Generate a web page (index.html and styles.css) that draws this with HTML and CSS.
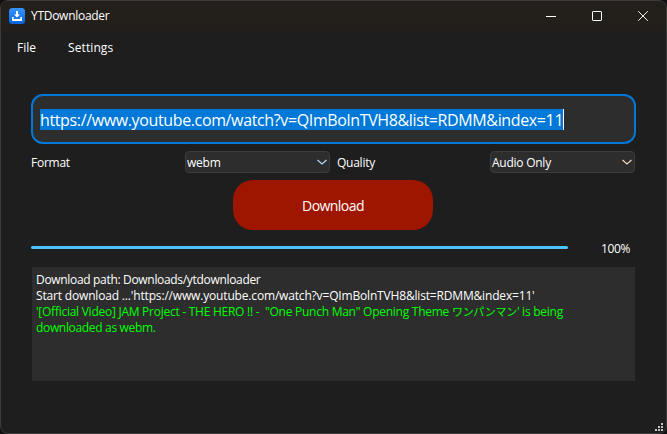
FILE: index.html
```html
<!DOCTYPE html>
<html lang="en">
<head>
<meta charset="utf-8">
<title>YTDownloader</title>
<link rel="stylesheet" href="styles.css">
</head>
<body>
<div class="window">
  <header class="titlebar">
    <svg class="logo" width="16" height="16" viewBox="0 0 16 16">
      <defs><linearGradient id="g" x1="0" y1="0" x2="0" y2="1"><stop offset="0" stop-color="#3594fb"/><stop offset="1" stop-color="#0864df"/></linearGradient></defs>
      <rect width="16" height="16" rx="3.5" fill="url(#g)"/>
      <path d="M7 3h2v3.500h2L8 9.500 5 6.500h2zM3 9h1.700v2h6.600V9H13v4H3z" fill="#fff"/>
    </svg>
    <span class="title">YTDownloader</span>
    <div class="controls">
      <svg width="12" height="12" viewBox="0 0 12 12"><path d="M1 6.500h10" stroke="#fff"/></svg>
      <svg width="12" height="12" viewBox="0 0 12 12"><rect x="1.500" y="1.500" width="9" height="9" rx=".6" fill="none" stroke="#fff"/></svg>
      <svg width="12" height="12" viewBox="0 0 12 12"><path d="m1.200 1.200 9.600 9.600m0-9.600-9.600 9.600" stroke="#eee"/></svg>
    </div>
  </header>
  <nav class="menubar"><span class="file">File</span><span class="settings">Settings</span></nav>
  <main class="content">
    <div class="url"><span class="selected">https://www.youtube.com/watch?v=QImBolnTVH8&amp;list=RDMM&amp;index=11</span></div>
    <div class="options">
      <label class="format">Format</label>
      <div class="combo"><span class="value">webm</span><svg width="12" height="8" viewBox="0 0 12 8"><path d="m1.500 2 4.500 4 4.500-4" fill="none" stroke="#b9d7f4" stroke-width="1.200"/></svg></div>
      <label class="quality">Quality</label>
      <div class="combo"><span class="value">Audio Only</span><svg width="12" height="8" viewBox="0 0 12 8"><path d="m1.500 2 4.500 4 4.500-4" fill="none" stroke="#f0d5b8" stroke-width="1.200"/></svg></div>
    </div>
    <button class="download">Download</button>
    <div class="progress"><div class="bar"></div><span class="percent">100%</span></div>
    <div class="log">
      <div class="path">Download path: Downloads/ytdownloader</div>
      <div class="start">Start download ...'https://www.youtube.com/watch?v=QImBolnTVH8&amp;list=RDMM&amp;index=11'</div>
      <div class="ok video">'[Official Video] JAM Project - THE HERO !! -&nbsp; "One Punch Man" Opening Theme <span class="jp">ワンパンマン</span>' is being</div>
      <div class="ok result">downloaded as webm.</div>
    </div>
  </main>
  <svg class="grip" width="8" height="8" viewBox="0 0 8 8" fill="#c4c4c4"><path d="M6 0h2v2H6zM3 3h2v2H3zM6 3h2v2H6zM0 6h2v2H0zM3 6h2v2H3zM6 6h2v2H6z"/></svg>
</div>
</body>
</html>
```
FILE: styles.css
```css
* { box-sizing: border-box; }
body {
  margin: 0;
  background: #111;
  color: #fff;
  font: 12px/16px "Open Sans", "Noto Sans CJK JP", sans-serif;
  white-space: nowrap;
}
.window {
  position: relative;
  width: 667px;
  height: 434px;
  border: 1px solid #3b3b3b;
  border-radius: 8px;
  background: #1e1e1e;
  overflow: hidden;
}
.titlebar {
  display: flex;
  align-items: center;
  height: 30px;
  padding: 0 17px 0 8px;
  background: #231f1b;
}
.logo { margin-right: 6px; }
.title { letter-spacing: -0.28px; }
.controls { display: flex; gap: 34px; margin-left: auto; margin-bottom: 1px; }
.menubar { display: flex; height: 32px; padding: 9px 16px; }
.file { width: 51px; }
.settings { letter-spacing: 0.1px; }
.content { padding: 31px 30px 0; }
.url {
  display: flex;
  align-items: center;
  height: 50px;
  width: 605px;
  padding-left: 7px;
  border: 2px solid #0078d7;
  border-radius: 12px;
  background: #2d2d2d;
}
.selected {
  width: 524px;
  height: 21px;
  background: #0078d7;
  border-right: 1px solid #fff;
  font-size: 16px;
  line-height: 23px;
  letter-spacing: -0.365px;
}
.options {
  display: grid;
  grid-template-columns: 154px 145px 160px 145px;
  align-items: center;
  height: 22px;
  margin-top: 7px;
}
.format, .quality, .value { padding-top: 2px; letter-spacing: -0.25px; }
.quality { padding-left: 7px; }
.combo {
  display: flex;
  align-items: center;
  justify-content: space-between;
  height: 22px;
  padding: 0 1px;
  border: 1px solid #3c3c3c;
  border-radius: 4px;
  background: #2d2d2d;
}
.download {
  display: block;
  width: 200px;
  height: 50px;
  margin: 7px 0 0 202px;
  padding: 2px 0 0;
  border: 0;
  border-radius: 20px;
  background: #9e1500;
  color: #fff;
  font: 14px/20px "Open Sans", sans-serif;
  letter-spacing: -0.55px;
}
.progress { display: flex; align-items: center; height: 37px; }
.bar { width: 537px; height: 3px; margin-bottom: 2px; border-radius: 2px; background: #4cc2ff; }
.percent { margin-left: 33px; letter-spacing: -0.4px; }
.log {
  width: 603px;
  height: 114px;
  margin-left: 1px;
  padding: 5px 4px;
  background: #2d2d2d;
}
.ok { color: #0f0; }
.path { letter-spacing: -0.32px; }
.start { letter-spacing: -0.17px; }
.video { letter-spacing: -0.26px; }
.result { letter-spacing: -0.33px; }
.jp { font-size: 11px; }
.grip { position: absolute; right: 3px; bottom: 2px; }
```
